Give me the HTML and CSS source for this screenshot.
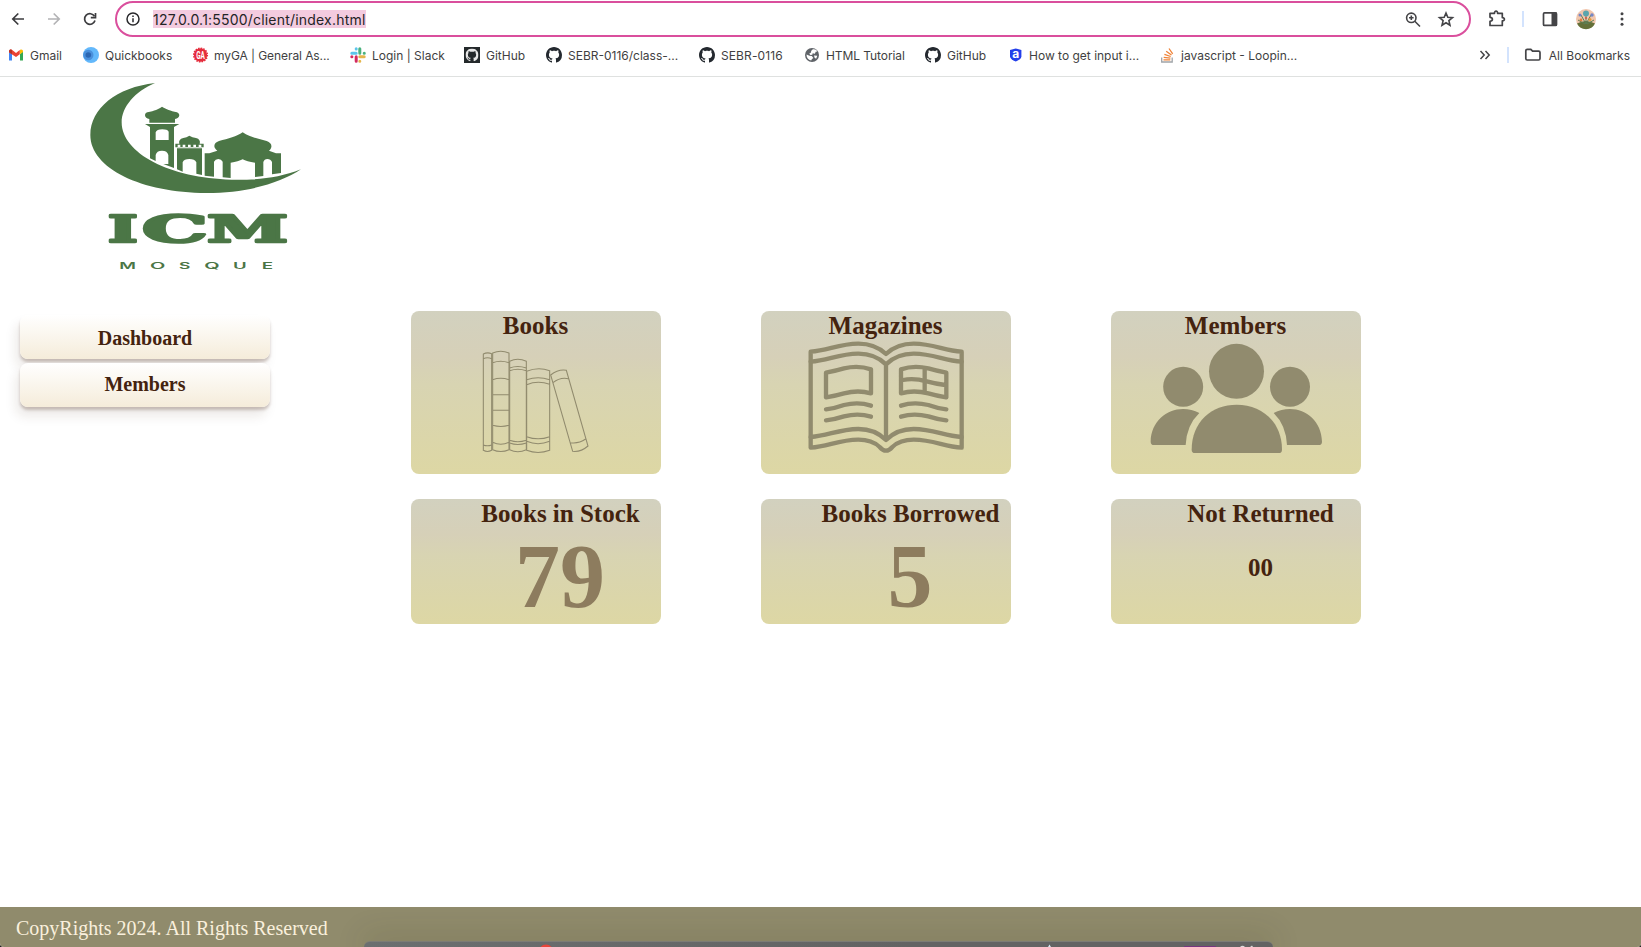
FILE: index.html
```html
<!DOCTYPE html>
<html lang="en">
<head>
<meta charset="utf-8">
<title>ICM Mosque Library</title>
<link rel="stylesheet" href="styles.css">
</head>
<body>
<svg class="defs" width="0" height="0">
  <symbol id="octocat" viewBox="0 0 16 16"><path d="M8 0C3.58 0 0 3.58 0 8c0 3.54 2.29 6.53 5.47 7.59.4.07.55-.17.55-.38 0-.19-.01-.82-.01-1.49-2.01.37-2.53-.49-2.69-.94-.09-.23-.48-.94-.82-1.13-.28-.15-.68-.52-.01-.53.63-.01 1.08.58 1.23.82.72 1.21 1.87.87 2.33.66.07-.52.28-.87.51-1.07-1.78-.2-3.64-.89-3.64-3.95 0-.87.31-1.59.82-2.15-.08-.2-.36-1.02.08-2.12 0 0 .67-.21 2.2.82.64-.18 1.32-.27 2-.27s1.36.09 2 .27c1.53-1.04 2.2-.82 2.2-.82.44 1.1.16 1.92.08 2.12.51.56.82 1.27.82 2.15 0 3.07-1.87 3.75-3.65 3.95.29.25.54.73.54 1.48 0 1.07-.01 1.93-.01 2.2 0 .21.15.46.55.38A8.01 8.01 0 0 0 16 8c0-4.42-3.58-8-8-8z"/></symbol>
</svg>
<div class="window">
  <header class="browser">
    <div class="toolbar">
      <svg class="nav" viewBox="0 0 115 38" fill="none" stroke="#3c3c3f" stroke-width="1.7">
        <path d="M24 19H13M18.3 13.5 12.8 19l5.500 5.500"/>
        <path stroke="#b3b3b5" d="M48 19h11M53.700 13.500 59.200 19l-5.500 5.500"/>
        <path d="M94.500 16.300A5.300 5.300 0 1 0 95 20.500"/><path d="M95.500 13v4.600h-4.700" />
      </svg>
      <div class="omnibox">
        <svg class="info" viewBox="0 0 16 16" fill="none" stroke="#29292c" stroke-width="1.500"><circle cx="8" cy="8" r="6"/><path d="M8 7.300v4M8 4.500v1.500"/></svg>
        <span class="url">127.0.0.1:5500/client/index.html</span>
        <svg class="omni-icons" viewBox="0 0 60 24" fill="none" stroke="#444447" stroke-width="1.600"><circle cx="11.300" cy="10.800" r="4.700"/><path d="M14.800 14.300 20 19.500M11.300 8.500v4.600M9 10.800h4.600"/><path stroke-linejoin="miter" d="M46 6l1.800 4.200 4.700.4-3.600 3 1.100 4.600-4-2.500-4 2.500 1.100-4.600-3.600-3 4.700-.4z"/></svg>
      </div>
      <svg class="actions" viewBox="1471 0 170 38">
        <path d="M1490 13.300h4.500c-.4-2.800 3.500-2.800 3.100 0h4.700v4.300c2.800-.3 2.800 3.600 0 3.300v4.600H1490v-4.200c3.200-.2 3.200-3.800 0-4z" fill="none" stroke="#444447" stroke-width="1.700" stroke-linejoin="round"/>
        <path d="M1523 11v16" stroke="#d3e3fd" stroke-width="2"/>
        <rect x="1543.500" y="12.900" width="13" height="12.500" rx="1" fill="none" stroke="#444447" stroke-width="1.700"/><path d="M1551.500 12.500h5.500v13h-5.500z" fill="#444447"/>
        <circle cx="1586" cy="19" r="10" fill="#f1c6ad"/><path d="M1577 23.500q9-5 18 0a10 10 0 0 1-18 0z" fill="#647039"/>
        <g stroke="#5d8058" stroke-width="1"><path d="M1586 24V14M1586 24l-5-9M1586 24l5-9M1585 24l-7-4M1587 24l7-4"/></g>
        <g fill="#5ba5ad"><circle cx="1586" cy="13.500" r="3"/><circle cx="1580" cy="15" r="1.500" fill="#7487c8"/><circle cx="1592" cy="15" r="1.700" fill="#7487c8"/><circle cx="1581" cy="20" r="1.400" fill="#e07f40"/><circle cx="1590" cy="19.500" r="1.500" fill="#e49b3c"/><circle cx="1586" cy="18" r="1.100" fill="#d65949"/></g>
        <g fill="#444447"><circle cx="1622" cy="13.700" r="1.500"/><circle cx="1622" cy="19" r="1.500"/><circle cx="1622" cy="24.300" r="1.500"/></g>
      </svg>
    </div>
    <nav class="bookmarks">
      <span class="bm"><svg viewBox="0 0 16 16"><path d="M1 4.500v9h3V7z" fill="#4285f4"/><path d="M15 4.500v9h-3V7z" fill="#34a853"/><path d="M1 4.200C1 2.500 3 2 4.200 3L8 6l3.800-3v4.200L8 10 1 5.500z" fill="#ea4335"/><path d="M1 4.200C1 2.500 3 2 4 2.900v4.300L1 5z" fill="#b93529"/><path d="M12 3c1.500-1 3-.200 3 1.300V5l-3 2.300z" fill="#fbbc04"/></svg>Gmail</span>
      <span class="bm"><svg viewBox="0 0 16 16"><circle cx="8" cy="8" r="8" fill="#63b8fb"/><circle cx="5.300" cy="8" r="5.200" fill="#4a90dc"/><circle cx="5.300" cy="8" r="2.800" fill="#2c67b2"/></svg>Quickbooks</span>
      <span class="bm tight"><svg viewBox="0 0 16 16"><circle cx="7.500" cy="8" r="6.700" fill="#e52c3c"/><circle cx="7.500" cy="8" r="6.900" fill="none" stroke="#e52c3c" stroke-width="1.400" stroke-dasharray="1.500 1.210"/><text x="3.200" y="11.800" textLength="8.600" lengthAdjust="spacingAndGlyphs" class="ga">GA</text></svg>myGA | General As...</span>
      <span class="bm"><svg viewBox="0 0 16 16" fill="none" stroke-width="3" stroke-linecap="round"><path d="M6.200 1.800v.1M1.800 6.200h4.400" stroke="#5bc5ec"/><path d="M9.800 1.800v4.400M14.200 6.200h.1" stroke="#49b27e"/><path d="M9.800 9.800h4.400M9.800 14.200v.1" stroke="#e5b64c"/><path d="M6.200 9.800v4.400M1.800 9.800h.1" stroke="#d22b60"/></svg>Login | Slack</span>
      <span class="bm"><svg viewBox="0 0 16 16"><path d="M0 0h16v16H0z" fill="#24292b"/><use href="#octocat" x="1.500" y="1.500" width="13" height="13" fill="#e8e8e8"/></svg>GitHub</span>
      <span class="bm"><svg viewBox="0 0 16 16" fill="#24292f"><use href="#octocat"/></svg>SEBR-0116/class-...</span>
      <span class="bm loose"><svg viewBox="0 0 16 16" fill="#24292f"><use href="#octocat"/></svg>SEBR-0116</span>
      <span class="bm tight"><svg viewBox="0 0 16 16"><circle cx="7" cy="8" r="7" fill="#5f6368"/><path d="M7.500 2.500c2-.7 4 .3 4.800 2l-1.600.2-.8 2-2.200-.5-.4 1.500-2 .2-1-1.500 1.500-.6.500-2zM1.500 7.500l3 1.300 2.300.3 1.500 2-1.500 1.100-.6 1.300C3.200 13 1.500 10.500 1.500 7.500zM9 8.500l3.300.3-1.200 3-1.500-1z" fill="#fff"/></svg>HTML Tutorial</span>
      <span class="bm"><svg viewBox="0 0 16 16" fill="#24292f"><use href="#octocat"/></svg>GitHub</span>
      <span class="bm"><svg class="narrow" viewBox="0 0 14 16"><path d="M1 3 6.700 1.500 12.400 3v6.500Q12 12.500 6.700 14.500 1.500 12.500 1 9.500z" fill="#2440ea"/><text x="3.200" y="11" class="a">a</text></svg>How to get input i...</span>
      <span class="bm"><svg class="narrow" viewBox="0 0 14 16" fill="none"><path d="M.7 10.500v4.500h10.500v-4.500" stroke="#a0a4a8" stroke-width="1.300"/><path d="M2.500 12.800h6.800M2.700 10.300l6.700.9M3.400 7.300l6.300 2.200M5.200 4.200 10.500 8M8 1.500l3.700 5.300" stroke="#ef8236" stroke-width="1.300"/></svg>javascript - Loopin...</span>
      <span class="all-bm"><svg viewBox="1475 0 70 38" fill="none" stroke="#444447"><path d="M1480.500 15l3.700 4-3.700 4M1485.500 15l3.700 4-3.700 4" stroke-width="1.500"/><path d="M1508 11v16" stroke="#d3e3fd" stroke-width="2"/><path d="M1525.800 14.700q0-1.400 1.400-1.400h3.600l1.800 1.900h6q1.400 0 1.400 1.400v6q0 1.400-1.400 1.400h-11.400q-1.400 0-1.400-1.400z" stroke-width="1.700"/></svg>All Bookmarks</span>
    </nav>
  </header>

  <main class="page">
    <svg class="logo" viewBox="0 6 750 609" fill="#4b7646">
      <path d="M255 24C140 37 61 100 61 180C61 280 215 354 410 354C530 354 630 325 693 283C625 309 570 315 485 314C300 310 155 235 155 142C155 95 195 50 255 24Z"/>
      <path d="M238 143V132C222 130 222 115 232 112C255 107 264 103 276 95C290 103 300 107 321 112C331 116 331 130 315 132V143ZM225 147H328L312 156V279L280 267H295V240Q292 227 276 227Q260 227 257 240V258L240 250V156ZM257 195H296V170Q292 163 277 163Q260 163 257 172Z" fill-rule="evenodd"/>
      <path d="M328 207Q324 193 340 189Q350 187 358 182Q367 187 378 189Q393 193 389 207ZM316 206H401V217H316ZM321 220H396V300L379 296V262Q374 252 358 252Q342 252 338 262V290L321 283Z"/>
      <path d="M323 209h8v7h-8zM338 209h8v7h-8zM354 209h8v7h-8zM370 209h8v7h-8zM386 209h8v7h-8z" fill="#fff"/>
      <path d="M404 235H418L442 227C428 216 431 204 447 198C475 191 500 185 518 172C540 187 565 191 590 198C606 204 609 216 597 227L618 235H633V294L606 298V261Q602 252 592 252Q583 252 580 261V303L555 306V263Q530 260 518 253Q505 260 482 263V309L458 307V260Q454 252 445 252Q436 252 432 260V305L404 302Z"/>
      <g class="wordmark">
        <text x="114" y="500" textLength="89" lengthAdjust="spacingAndGlyphs">I</text>
        <text x="217" y="500" textLength="196" lengthAdjust="spacingAndGlyphs">C</text>
        <text x="412" y="500" textLength="242" lengthAdjust="spacingAndGlyphs">M</text>
      </g>
      <g class="tagline">
        <text x="148" y="581" textLength="50" lengthAdjust="spacingAndGlyphs">M</text>
        <text x="240" y="581" textLength="46" lengthAdjust="spacingAndGlyphs">O</text>
        <text x="327" y="581" textLength="34" lengthAdjust="spacingAndGlyphs">S</text>
        <text x="403" y="581" textLength="46" lengthAdjust="spacingAndGlyphs">Q</text>
        <text x="489" y="581" textLength="41" lengthAdjust="spacingAndGlyphs">U</text>
        <text x="575" y="581" textLength="34" lengthAdjust="spacingAndGlyphs">E</text>
      </g>
    </svg>

    <div class="content">
      <aside class="sidebar">
        <a class="menu-btn">Dashboard</a>
        <a class="menu-btn">Members</a>
      </aside>
      <section class="cards">
        <article class="card tall">
          <h2>Books</h2>
          <svg class="art" viewBox="33 120 750 402" fill="none" stroke="#918b6e" stroke-width="3.200">
            <path d="M250 162Q262 156 275 161V451Q262 458 250 451ZM250 176Q262 171 275 176M250 435Q262 440 275 435"/>
            <path d="M278 159Q302 148 327 159V449Q302 460 278 449ZM278 188Q302 179 327 188M278 239Q302 231 327 239M278 284H327M278 331H327M278 376Q302 383 327 376M278 427Q302 439 327 427"/>
            <path d="M329 184Q353 172 379 184V449Q353 461 329 449ZM329 204Q353 195 379 204M329 212Q353 203 379 212M329 421Q353 430 379 421M329 429Q353 438 379 429"/>
            <path d="M380 214Q414 200 449 212V451Q414 464 380 451ZM380 239Q414 227 449 239M380 254Q414 240 449 253M380 410Q414 423 449 410M380 424Q414 438 449 424"/>
            <path d="M452 225Q475 207 499 211L564 438Q542 457 518 454ZM459 248Q480 231 505 236M511 428Q535 432 557 417"/>
          </svg>
        </article>
        <article class="card tall">
          <h2>Magazines</h2>
          <svg class="art" viewBox="33 120 750 402" fill="none" stroke="#918b6e" stroke-width="13" stroke-linejoin="round" stroke-linecap="round">
            <path d="M182 155C235 151 265 132 325 131Q375 131 408 162Q441 131 491 131C551 132 581 151 635 155V443C581 439 551 420 491 419Q450 419 427 441Q408 463 389 441Q366 419 325 419C265 420 235 439 182 443Z"/>
            <path d="M182 185C235 181 265 162 325 161Q375 161 408 193Q441 161 491 161C551 162 581 181 635 185M182 411C235 407 265 388 325 387Q375 387 408 420Q441 387 491 387C551 388 581 407 635 411M408 193V420"/>
            <path d="M228 218Q258 212 282 205Q325 195 363 208V280Q325 269 282 280Q258 287 228 292ZM228 328Q258 324 282 315Q325 304 363 317M228 361Q258 357 282 349Q325 338 363 350"/>
            <path d="M589 218Q559 212 535 205Q491 195 453 208V280Q491 269 535 280Q559 287 589 292ZM589 328Q559 324 535 315Q491 304 453 317M589 361Q559 357 535 349Q491 338 453 350M524 207V276M459 240Q491 233 530 244Q560 252 586 255"/>
          </svg>
        </article>
        <article class="card tall">
          <h2>Members</h2>
          <svg class="art" viewBox="33 120 750 402" fill="#918b6e">
            <circle cx="409.500" cy="214" r="82.500"/><circle cx="249.500" cy="260.500" r="60"/><circle cx="570" cy="260.500" r="60"/>
            <path d="M275 449C275 365 335 314 410 314S546 365 546 449Q546 459 536 459H285Q275 459 275 449Z"/>
            <path d="M298 339Q260 375 257 435H162Q152 435 152 425C153 365 200 327 249 327Q275 327 298 339ZM521 339Q558 375 561 435H656Q666 435 666 425C665 365 619 327 570 327Q544 327 521 339Z"/>
          </svg>
        </article>
        <article class="card stat"><h2>Books in Stock</h2><p class="count">79</p></article>
        <article class="card stat"><h2>Books Borrowed</h2><p class="count">5</p></article>
        <article class="card stat"><h2>Not Returned</h2><p class="zero">00</p></article>
      </section>
    </div>
  </main>
  <footer class="footer">CopyRights 2024. All Rights Reserved</footer>
  <div class="dock">
    <svg viewBox="364 942 909 5"><circle cx="546" cy="952" r="7.500" fill="#e8453a"/><path d="M1048 947l1.500-2.500 1.500 2.500z" fill="#d6e8f4"/><path d="M1184 947v-1h32v1z" fill="#77367f"/><path d="M1240 947q2.500-2.500 5 0zM1250 947l2-1.500 1 1.500z" fill="#ddd"/></svg>
  </div>
</div>
</body>
</html>
```

FILE: styles.css
```css
* { box-sizing: border-box; }

body {
  margin: 0;
  background: #222;
  font-family: "Liberation Serif", "Times New Roman", serif;
  color: #44230f;
}

svg { display: block; flex: none; }
.defs { position: absolute; }

.window {
  position: relative;
  display: flex;
  flex-direction: column;
  height: 947px;
  overflow: hidden;
  background: #fff;
  border-radius: 0 0 4px 4px;
}

/* Browser bars */
.browser {
  height: 77px;
  border-bottom: 1px solid #dfe1e0;
  font-family: Inter, "Liberation Sans", sans-serif;
}

.toolbar { display: flex; height: 37px; }
.nav { width: 115px; height: 38px; }

.omnibox {
  display: flex;
  align-items: center;
  width: 1356px;
  height: 36px;
  margin-top: 1px;
  padding: 0 0 0 8px;
  border: 2px solid #da4f9d;
  border-radius: 18px;
}

.info { width: 16px; height: 16px; margin-right: 12px; }

.url {
  height: 18px;
  line-height: 19px;
  font-size: 14px;
  letter-spacing: 0.2px;
  color: #242426;
  background: #f3cbdf;
}

.omni-icons { width: 60px; height: 24px; margin-left: auto; margin-right: 9px; }
.actions { width: 170px; height: 38px; }

.bookmarks {
  display: grid;
  grid-template-columns: 75px 110px 157px 114px 82px 153px 106px 120px 84px 152px 1fr auto;
  align-items: center;
  height: 38px;
  margin-top: -1px;
  padding: 0 11px 0 8px;
  font-size: 12px;
  color: #3f3f42;
  white-space: nowrap;
}

.bm { display: flex; align-items: center; gap: 6px; }
.bm.tight { gap: 5px; letter-spacing: -0.08px; }
.bm.loose { letter-spacing: 0.1px; }
.bm svg { width: 16px; height: 16px; }
.bm .narrow { width: 14px; }
.ga { font: bold 10px Roboto, sans-serif; fill: #fff; }
.a { font: bold 12px Inter, sans-serif; fill: #fff; }

.all-bm { display: flex; align-items: center; gap: 4px; }
.all-bm svg { width: 70px; height: 38px; }

/* Page */
.page { height: 830px; flex: none; }

.logo { width: 250px; height: 203px; margin-left: 70px; }
.wordmark text {
  font: bold 112px "DejaVu Serif", serif;
  stroke: #4b7646;
  stroke-width: 8px;
  stroke-linejoin: round;
}
.tagline text { font: 600 25px Inter, sans-serif; }

.content { display: flex; align-items: flex-start; padding: 31px 0 0 20px; }

.sidebar {
  display: flex;
  flex-direction: column;
  gap: 4px;
  width: 250px;
  margin: 4px 141px 0 0;
}

.menu-btn {
  height: 44px;
  border-radius: 8px;
  background: linear-gradient(#fff, #f5ecda);
  box-shadow: 0 3px 3px rgba(68, 35, 15, 0.24), -4px 9px 12px rgba(68, 35, 15, 0.1);
  font-size: 20px;
  font-weight: bold;
  line-height: 46px;
  text-align: center;
}
.menu-btn + .menu-btn { line-height: 43px; }

.cards {
  display: grid;
  grid-template-columns: repeat(3, 250px);
  gap: 25px 100px;
}

.card {
  border-radius: 8px;
  background: linear-gradient(#d2d1bf, #d6d0b8 28%, #d8d4b2 45%, #ddd7a4);
}
.tall { height: 163px; }
.stat { height: 125px; padding-left: 50px; }

.card h2 {
  margin: 0 1px 0 0;
  font-size: 25px;
  line-height: 29px;
  text-align: center;
}

.art { width: 250px; height: 134px; }

.count, .zero { margin: 0 1px 0 0; text-align: center; font-weight: bold; }
.count { margin-right: 2px; font-size: 90px; line-height: 98px; color: #8d7c5e; }
.zero { font-size: 25px; line-height: 79px; }

.footer {
  flex: none;
  height: 40px;
  padding-left: 16px;
  background: #908b6c;
  color: #faf0dc;
  font-size: 20px;
  line-height: 42px;
}

/* Desktop dock peeking over the window's bottom edge */
.dock {
  position: absolute;
  left: 364px;
  bottom: 0;
  width: 909px;
  height: 6px;
  border-top: 1px solid #7c7c76;
  border-radius: 10px 10px 0 0;
  background: linear-gradient(90deg, #6b6f70, #636363 60%);
  box-shadow: 0 0 30px rgba(50, 50, 20, 0.45);
}
.dock svg { width: 909px; height: 5px; }
```
